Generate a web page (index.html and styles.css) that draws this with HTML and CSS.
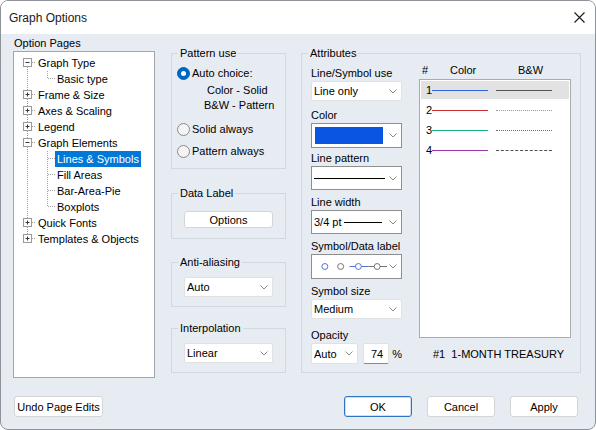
FILE: index.html
```html
<!DOCTYPE html>
<html>
<head>
<meta charset="utf-8">
<title>Graph Options</title>
<link rel="stylesheet" href="styles.css">
</head>
<body>
<div class="window">
  <div class="titlebar">
    <span class="title">Graph Options</span>
    <svg class="close" width="11" height="11" viewBox="0 0 11 11"><path d="M0.5 0.5 L10.5 10.5 M10.5 0.5 L0.5 10.5" stroke="#1a1a1a" stroke-width="1.1" fill="none"/></svg>
  </div>

  <div class="main">
    <div class="pages">
      <div class="pages-label">Option Pages</div>
      <div class="tree">
        <div class="row"><svg width="22" height="16"><line class="dot" x1="13.5" y1="12" x2="13.5" y2="16"/><line class="dot" x1="18" y1="7.5" x2="22" y2="7.5"/><rect class="box" x="9.5" y="3.5" width="8" height="8"/><line class="sign" x1="11.5" y1="7.5" x2="15.5" y2="7.5"/></svg><span class="t">Graph Type</span></div>
        <div class="row"><svg width="41" height="16"><line class="dot" x1="13.5" y1="0" x2="13.5" y2="16"/><line class="dot" x1="33.5" y1="0" x2="33.5" y2="8"/><line class="dot" x1="34" y1="7.5" x2="41" y2="7.5"/></svg><span class="t">Basic type</span></div>
        <div class="row"><svg width="22" height="16"><line class="dot" x1="13.5" y1="0" x2="13.5" y2="16"/><line class="dot" x1="18" y1="7.5" x2="22" y2="7.5"/><rect class="box" x="9.5" y="3.5" width="8" height="8"/><line class="sign" x1="11.5" y1="7.5" x2="15.5" y2="7.5"/><line class="sign" x1="13.5" y1="5.5" x2="13.5" y2="9.5"/></svg><span class="t">Frame &amp; Size</span></div>
        <div class="row"><svg width="22" height="16"><line class="dot" x1="13.5" y1="0" x2="13.5" y2="16"/><line class="dot" x1="18" y1="7.5" x2="22" y2="7.5"/><rect class="box" x="9.5" y="3.5" width="8" height="8"/><line class="sign" x1="11.5" y1="7.5" x2="15.5" y2="7.5"/><line class="sign" x1="13.5" y1="5.5" x2="13.5" y2="9.5"/></svg><span class="t">Axes &amp; Scaling</span></div>
        <div class="row"><svg width="22" height="16"><line class="dot" x1="13.5" y1="0" x2="13.5" y2="16"/><line class="dot" x1="18" y1="7.5" x2="22" y2="7.5"/><rect class="box" x="9.5" y="3.5" width="8" height="8"/><line class="sign" x1="11.5" y1="7.5" x2="15.5" y2="7.5"/><line class="sign" x1="13.5" y1="5.5" x2="13.5" y2="9.5"/></svg><span class="t">Legend</span></div>
        <div class="row"><svg width="22" height="16"><line class="dot" x1="13.5" y1="0" x2="13.5" y2="16"/><line class="dot" x1="18" y1="7.5" x2="22" y2="7.5"/><rect class="box" x="9.5" y="3.5" width="8" height="8"/><line class="sign" x1="11.5" y1="7.5" x2="15.5" y2="7.5"/></svg><span class="t">Graph Elements</span></div>
        <div class="row"><svg width="41" height="16"><line class="dot" x1="13.5" y1="0" x2="13.5" y2="16"/><line class="dot" x1="33.5" y1="0" x2="33.5" y2="16"/><line class="dot" x1="34" y1="7.5" x2="41" y2="7.5"/></svg><span class="t sel">Lines &amp; Symbols</span></div>
        <div class="row"><svg width="41" height="16"><line class="dot" x1="13.5" y1="0" x2="13.5" y2="16"/><line class="dot" x1="33.5" y1="0" x2="33.5" y2="16"/><line class="dot" x1="34" y1="7.5" x2="41" y2="7.5"/></svg><span class="t">Fill Areas</span></div>
        <div class="row"><svg width="41" height="16"><line class="dot" x1="13.5" y1="0" x2="13.5" y2="16"/><line class="dot" x1="33.5" y1="0" x2="33.5" y2="16"/><line class="dot" x1="34" y1="7.5" x2="41" y2="7.5"/></svg><span class="t">Bar-Area-Pie</span></div>
        <div class="row"><svg width="41" height="16"><line class="dot" x1="13.5" y1="0" x2="13.5" y2="16"/><line class="dot" x1="33.5" y1="0" x2="33.5" y2="8"/><line class="dot" x1="34" y1="7.5" x2="41" y2="7.5"/></svg><span class="t">Boxplots</span></div>
        <div class="row"><svg width="22" height="16"><line class="dot" x1="13.5" y1="0" x2="13.5" y2="16"/><line class="dot" x1="18" y1="7.5" x2="22" y2="7.5"/><rect class="box" x="9.5" y="3.5" width="8" height="8"/><line class="sign" x1="11.5" y1="7.5" x2="15.5" y2="7.5"/><line class="sign" x1="13.5" y1="5.5" x2="13.5" y2="9.5"/></svg><span class="t">Quick Fonts</span></div>
        <div class="row"><svg width="22" height="16"><line class="dot" x1="13.5" y1="0" x2="13.5" y2="4"/><line class="dot" x1="18" y1="7.5" x2="22" y2="7.5"/><rect class="box" x="9.5" y="3.5" width="8" height="8"/><line class="sign" x1="11.5" y1="7.5" x2="15.5" y2="7.5"/><line class="sign" x1="13.5" y1="5.5" x2="13.5" y2="9.5"/></svg><span class="t">Templates &amp; Objects</span></div>
      </div>
    </div>

    <div class="middle">
      <fieldset class="group g-pattern">
        <legend>Pattern use</legend>
        <div class="pattern-body">
          <div class="radio-row first"><span class="radio on"></span><span>Auto choice:</span></div>
          <div class="sub sub-color">Color - Solid</div>
          <div class="sub sub-bw">B&amp;W - Pattern</div>
          <div class="radio-row solid"><span class="radio"></span><span>Solid always</span></div>
          <div class="radio-row always"><span class="radio"></span><span>Pattern always</span></div>
        </div>
      </fieldset>

      <fieldset class="group g-data">
        <legend>Data Label</legend>
        <div class="group-body data-body"><div class="btn btn-options">Options</div></div>
      </fieldset>

      <fieldset class="group g-anti">
        <legend>Anti-aliasing</legend>
        <div class="group-body select-body">
          <div class="combo mid-combo"><span>Auto</span><svg class="chev" width="8" height="5" viewBox="0 0 8 5"><polyline points="0.5,0.5 4,4 7.5,0.5" fill="none" stroke="#8a8a8a"/></svg></div>
        </div>
      </fieldset>

      <fieldset class="group g-interp">
        <legend>Interpolation</legend>
        <div class="group-body select-body">
          <div class="combo mid-combo"><span>Linear</span><svg class="chev" width="8" height="5" viewBox="0 0 8 5"><polyline points="0.5,0.5 4,4 7.5,0.5" fill="none" stroke="#8a8a8a"/></svg></div>
        </div>
      </fieldset>
    </div>

    <fieldset class="group g-attr">
      <legend>Attributes</legend>
      <div class="attr-grid">
        <div class="attr-left">
          <div class="field">
            <div class="flabel">Line/Symbol use</div>
            <div class="combo"><span>Line only</span><svg class="chev" width="8" height="5" viewBox="0 0 8 5"><polyline points="0.5,0.5 4,4 7.5,0.5" fill="none" stroke="#8a8a8a"/></svg></div>
          </div>
          <div class="field f-color">
            <div class="flabel">Color</div>
            <div class="combo owner tall"><span class="swatch"></span><svg class="chev" width="8" height="5" viewBox="0 0 8 5"><polyline points="0.5,0.5 4,4 7.5,0.5" fill="none" stroke="#8a8a8a"/></svg></div>
          </div>
          <div class="field f-pattern">
            <div class="flabel">Line pattern</div>
            <div class="combo owner mid"><svg width="71" height="3" viewBox="0 0 71 3"><line x1="0" y1="1.5" x2="71" y2="1.5" stroke="#000" stroke-width="1"/></svg><svg class="chev" width="8" height="5" viewBox="0 0 8 5"><polyline points="0.5,0.5 4,4 7.5,0.5" fill="none" stroke="#8a8a8a"/></svg></div>
          </div>
          <div class="field">
            <div class="flabel">Line width</div>
            <div class="combo owner mid"><span class="lw"><span>3/4 pt</span><svg width="38" height="3" viewBox="0 0 38 3"><line x1="0" y1="1.5" x2="38" y2="1.5" stroke="#000" stroke-width="1"/></svg></span><svg class="chev" width="8" height="5" viewBox="0 0 8 5"><polyline points="0.5,0.5 4,4 7.5,0.5" fill="none" stroke="#8a8a8a"/></svg></div>
          </div>
          <div class="field">
            <div class="flabel">Symbol/Data label</div>
            <div class="combo owner tall"><svg width="76" height="9" viewBox="0 0 76 9"><circle cx="11" cy="4.5" r="3" fill="none" stroke="#4a72d4"/><circle cx="27" cy="4.5" r="3" fill="none" stroke="#707070"/><line x1="36" y1="4.5" x2="55" y2="4.5" stroke="#4a72d4"/><line x1="55" y1="4.5" x2="74" y2="4.5" stroke="#707070"/><circle cx="45" cy="4.5" r="3" fill="#fff" stroke="#4a72d4"/><circle cx="64" cy="4.5" r="3" fill="#fff" stroke="#707070"/></svg><svg class="chev" width="8" height="5" viewBox="0 0 8 5"><polyline points="0.5,0.5 4,4 7.5,0.5" fill="none" stroke="#8a8a8a"/></svg></div>
          </div>
          <div class="field">
            <div class="flabel">Symbol size</div>
            <div class="combo"><span>Medium</span><svg class="chev" width="8" height="5" viewBox="0 0 8 5"><polyline points="0.5,0.5 4,4 7.5,0.5" fill="none" stroke="#8a8a8a"/></svg></div>
          </div>
          <div class="field f-opacity">
            <div class="flabel">Opacity</div>
            <div class="opacity-row">
              <div class="combo op-combo"><span>Auto</span><svg class="chev" width="8" height="5" viewBox="0 0 8 5"><polyline points="0.5,0.5 4,4 7.5,0.5" fill="none" stroke="#8a8a8a"/></svg></div>
              <div class="num">74</div>
              <span class="pct">%</span>
            </div>
          </div>
        </div>

        <div class="attr-right">
          <div class="thead"><span class="h-num">#</span><span class="h-color">Color</span><span>B&amp;W</span></div>
          <div class="list">
            <div class="lrow hl"><span class="n">1</span><span class="cl cl-blue"></span><span class="bw bw-solid"></span></div>
            <div class="lrow"><span class="n">2</span><span class="cl cl-red"></span><span class="bw bw-dot-light"></span></div>
            <div class="lrow"><span class="n">3</span><span class="cl cl-green"></span><span class="bw bw-dot"></span></div>
            <div class="lrow"><span class="n">4</span><span class="cl cl-purple"></span><span class="bw bw-dash"></span></div>
          </div>
          <div class="caption">#1&nbsp; 1-MONTH TREASURY</div>
        </div>
      </div>
    </fieldset>
  </div>

  <div class="footer">
    <div class="btn btn-undo">Undo Page Edits</div>
    <div class="footer-right">
      <div class="btn btn-main default">OK</div>
      <div class="btn btn-main">Cancel</div>
      <div class="btn btn-main">Apply</div>
    </div>
  </div>
</div>
</body>
</html>
```

FILE: styles.css
```css
* { box-sizing: border-box; }

html, body {
  margin: 0;
  padding: 0;
  background: #ffffff;
}

body {
  font-family: "Liberation Sans", Arial, sans-serif;
  font-size: 11px;
  color: #000;
}

.window {
  width: 596px;
  height: 430px;
  border: 1px solid #8e939a;
  border-radius: 8px;
  overflow: hidden;
  background: #e7ecf3;
  display: flex;
  flex-direction: column;
}

/* title bar */
.titlebar {
  flex: none;
  height: 33px;
  background: #ffffff;
  display: flex;
  align-items: center;
  justify-content: space-between;
  padding: 0 10px 0 8px;
}

.title {
  font-size: 12px;
  color: #1a1a1a;
}

.close { display: block; }

/* main area */
.main {
  display: flex;
  align-items: flex-start;
  padding: 2px 0 0 12px;
}

.pages {
  width: 142px;
  flex: none;
  display: flex;
  flex-direction: column;
}

.pages-label {
  line-height: 14px;
  margin-bottom: 1px;
  padding-left: 1px;
}

.tree {
  height: 327px;
  background: #ffffff;
  border: 1px solid #a2a7ae;
  padding-top: 3px;
}

.row {
  display: flex;
  align-items: center;
  height: 16px;
}

.row svg { display: block; flex: none; }

.row .t {
  padding: 0 2px;
  line-height: 16px;
  white-space: nowrap;
}

.row .t.sel {
  background: #0078d7;
  color: #ffffff;
}

.dot {
  stroke: #a0a0a0;
  stroke-width: 1;
  stroke-dasharray: 1 1;
}

.box {
  fill: #ffffff;
  stroke: #9a9a9a;
  stroke-width: 1;
}

.sign {
  stroke: #3a3a3a;
  stroke-width: 1;
}

/* group boxes */
.middle {
  width: 115px;
  flex: none;
  margin: 10px 15px 0 16px;
  display: flex;
  flex-direction: column;
}

.group {
  margin: 0;
  padding: 0;
  min-width: 0;
  border: 1px solid #d2d8e0;
}

.group legend {
  margin-left: 6px;
  padding: 0 2px;
  line-height: 14px;
}

.g-pattern { height: 123px; }
.g-data { height: 53px; margin-top: 17px; }
.g-anti { height: 52px; margin-top: 16px; }
.g-interp { height: 52px; margin-top: 14px; }

.pattern-body { padding: 5px 5px 0 5px; }

.radio-row {
  display: flex;
  align-items: center;
  gap: 2px;
  height: 16px;
}

.radio-row.solid { margin-top: 8px; }
.radio-row.always { margin-top: 6px; }

.radio {
  flex: none;
  width: 13px;
  height: 13px;
  border-radius: 50%;
  border: 1px solid #8a8a8a;
  background: #f4f4f4;
}

.radio.on {
  background: #0067c0;
  border-color: #0067c0;
  display: flex;
  align-items: center;
  justify-content: center;
}

.radio.on::after {
  content: "";
  width: 5px;
  height: 5px;
  border-radius: 50%;
  background: #ffffff;
}

.sub { line-height: 15px; }
.sub-color { padding-left: 30px; margin-top: 2px; }
.sub-bw { padding-left: 27px; }

.group-body { padding-left: 12px; }
.data-body { padding-top: 11px; }
.select-body { padding-top: 8px; }

/* buttons */
.btn {
  background: #ffffff;
  border: 1px solid #d5d5d5;
  border-radius: 3px;
  display: flex;
  align-items: center;
  justify-content: center;
}

.btn-options {
  width: 89px;
  height: 17px;
}

/* combos */
.combo {
  height: 20px;
  background: #ffffff;
  border: 1px solid #e1e1e1;
  border-radius: 2px;
  display: flex;
  align-items: center;
  justify-content: space-between;
  padding: 0 4px 0 2px;
}

.combo .chev { display: block; flex: none; }

.mid-combo { width: 89px; }

.combo.owner {
  border-color: #8f8f8f;
  border-radius: 0;
}

.combo.tall { height: 25px; }
.combo.mid { height: 24px; }

.swatch {
  width: 68px;
  height: 17px;
  background: #0a55e2;
  margin-left: 1px;
}

.lw {
  display: flex;
  align-items: center;
  gap: 2px;
}

.combo svg { display: block; }

/* attributes */
.g-attr {
  width: 280px;
  height: 327px;
  flex: none;
  margin-top: 10px;
}

.attr-grid {
  display: grid;
  grid-template-columns: 91px 152px;
  column-gap: 17px;
  padding: 0 8px 0 9px;
}

.attr-left {
  padding-top: 6px;
  display: flex;
  flex-direction: column;
  gap: 5px;
}

.f-color { margin-top: 2px; }
.f-pattern { margin-top: -2px; }
.f-opacity { margin-top: 4px; }

.flabel {
  line-height: 14px;
  margin-bottom: 1px;
}

.opacity-row {
  display: flex;
  align-items: center;
}

.op-combo {
  width: 53px;
  height: 21px;
  margin-right: 5px;
}

.num {
  width: 29px;
  height: 21px;
  background: #ffffff;
  border: 1px solid #e1e1e1;
  border-bottom-color: #8a8a8a;
  border-radius: 2px;
  padding-left: 7px;
  display: flex;
  align-items: center;
}

.pct { margin-left: 3px; }

.attr-right { padding-top: 3px; }

.thead {
  display: flex;
  line-height: 14px;
  padding-left: 3px;
  margin-bottom: 2px;
}

.h-num { width: 28px; }
.h-color { width: 68px; }

.list {
  height: 259px;
  background: #ffffff;
  border: 1px solid #ababab;
  padding: 1px;
  display: flex;
  flex-direction: column;
  gap: 2px;
}

.lrow {
  height: 18px;
  display: flex;
  align-items: center;
  padding-left: 5px;
}

.lrow.hl { background: #e2e2e2; }

.lrow .n { width: 6px; flex: none; }

.cl {
  flex: none;
  width: 56px;
  height: 0;
  border-top: 1px solid;
}

.cl-blue { border-top-color: #3366dd; }
.cl-red { border-top-color: #cc2f2f; }
.cl-green { border-top-color: #14b07f; }
.cl-purple { border-top-color: #9b34aa; }

.bw {
  flex: none;
  width: 56px;
  height: 0;
  margin-left: 8px;
  border-top: 1px solid #555555;
}

.bw-dot-light { border-top: 1px dotted #9a9a9a; }
.bw-dot { border-top: 1px dotted #707070; }
.bw-dash { border-top: 1px dashed #505050; }

.caption {
  margin-top: 9px;
  padding-left: 14px;
  line-height: 14px;
}

/* footer */
.footer {
  display: flex;
  justify-content: space-between;
  padding: 18px 17px 0 13px;
}

.btn-undo {
  width: 89px;
  height: 21px;
}

.footer-right {
  display: flex;
  gap: 15px;
}

.btn-main {
  width: 68px;
  height: 21px;
}

.btn.default {
  border-color: #2f74c4;
  box-shadow: inset 0 0 0 1px #cfe0f4;
}
```
